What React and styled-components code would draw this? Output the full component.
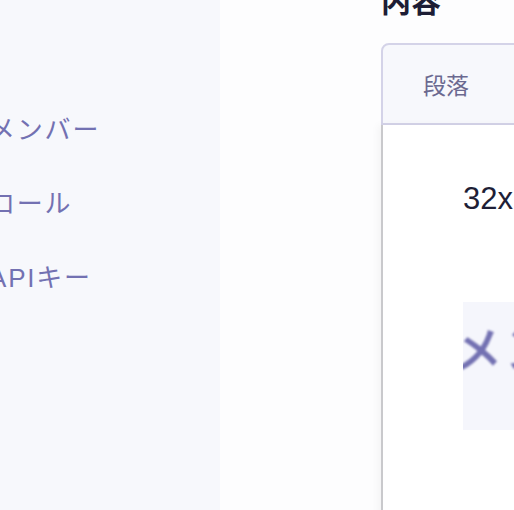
import React from 'react';
import styled, { createGlobalStyle } from 'styled-components';

const GlobalStyle = createGlobalStyle`
  html, body {
    margin: 0;
    padding: 0;
    overflow: hidden;
    background: #fdfdfe;
    font-family: 'Liberation Sans', 'Noto Sans CJK JP', sans-serif;
  }
`;

const navItems = ['メンバー', 'ロール', 'APIキー'];

const App = () => {
  return (
    <>
      <GlobalStyle />
      <Layout>
        <Sidebar>
          <NavList>
            {navItems.map((item) => (
              <NavItem key={item}>{item}</NavItem>
            ))}
          </NavList>
        </Sidebar>

        <Main>
          <Title>内容</Title>
          <Card>
            <CardHeader>
              <HeaderLabel>段落</HeaderLabel>
            </CardHeader>
            <CardBody>
              <SizeText>32x</SizeText>
              <Preview>
                <PreviewText>メンバー</PreviewText>
              </Preview>
            </CardBody>
          </Card>
        </Main>
      </Layout>
    </>
  );
};

export default App;

const Layout = styled.div`
  display: flex;
  margin-left: -24px;
  height: 510px;
`;

const Sidebar = styled.aside`
  flex: 0 0 244px;
  background: #f7f8fc;
  padding-top: 93px;
  box-sizing: border-box;
`;

const NavList = styled.ul`
  list-style: none;
  margin: 0;
  padding: 0;
`;

const NavItem = styled.li`
  padding: 22px 0 22px 13px;
  font-size: 26px;
  line-height: 30px;
  letter-spacing: 1.8px;
  color: #7371b2;
  white-space: nowrap;
`;

const Main = styled.main`
  flex: 1;
  padding-left: 161px;
  min-width: 0;
`;

const Title = styled.h1`
  margin: -13px 0 26px;
  font-size: 30px;
  line-height: 30px;
  font-weight: bold;
  color: #1d1d35;
  white-space: nowrap;
`;

const Card = styled.section`
  width: 600px;
`;

const CardHeader = styled.div`
  height: 78px;
  display: flex;
  align-items: center;
  padding-left: 40px;
  background: #f7f8fc;
  border: 2px solid #d4d3e8;
  border-top-left-radius: 8px;
`;

const HeaderLabel = styled.span`
  font-size: 23px;
  color: #6b6990;
`;

const CardBody = styled.div`
  height: 400px;
  padding: 57px 0 0 80px;
  background: #fff;
  border-left: 2px solid #c9c9cc;
  box-shadow: -3px 0 8px rgba(0, 0, 0, 0.04);
`;

const SizeText = styled.div`
  font-size: 31px;
  line-height: 34px;
  color: #1e1e36;
`;

const Preview = styled.div`
  margin-top: 86px;
  height: 128px;
  background: #f5f6fc;
  overflow: hidden;
  display: flex;
  align-items: flex-start;
`;

const PreviewText = styled.span`
  margin: 21px 0 0 -9px;
  font-size: 48px;
  line-height: 56px;
  letter-spacing: 3px;
  color: #7371b2;
  white-space: nowrap;
  -webkit-text-stroke: 1.5px #7371b2;
  filter: blur(0.9px);
`;
